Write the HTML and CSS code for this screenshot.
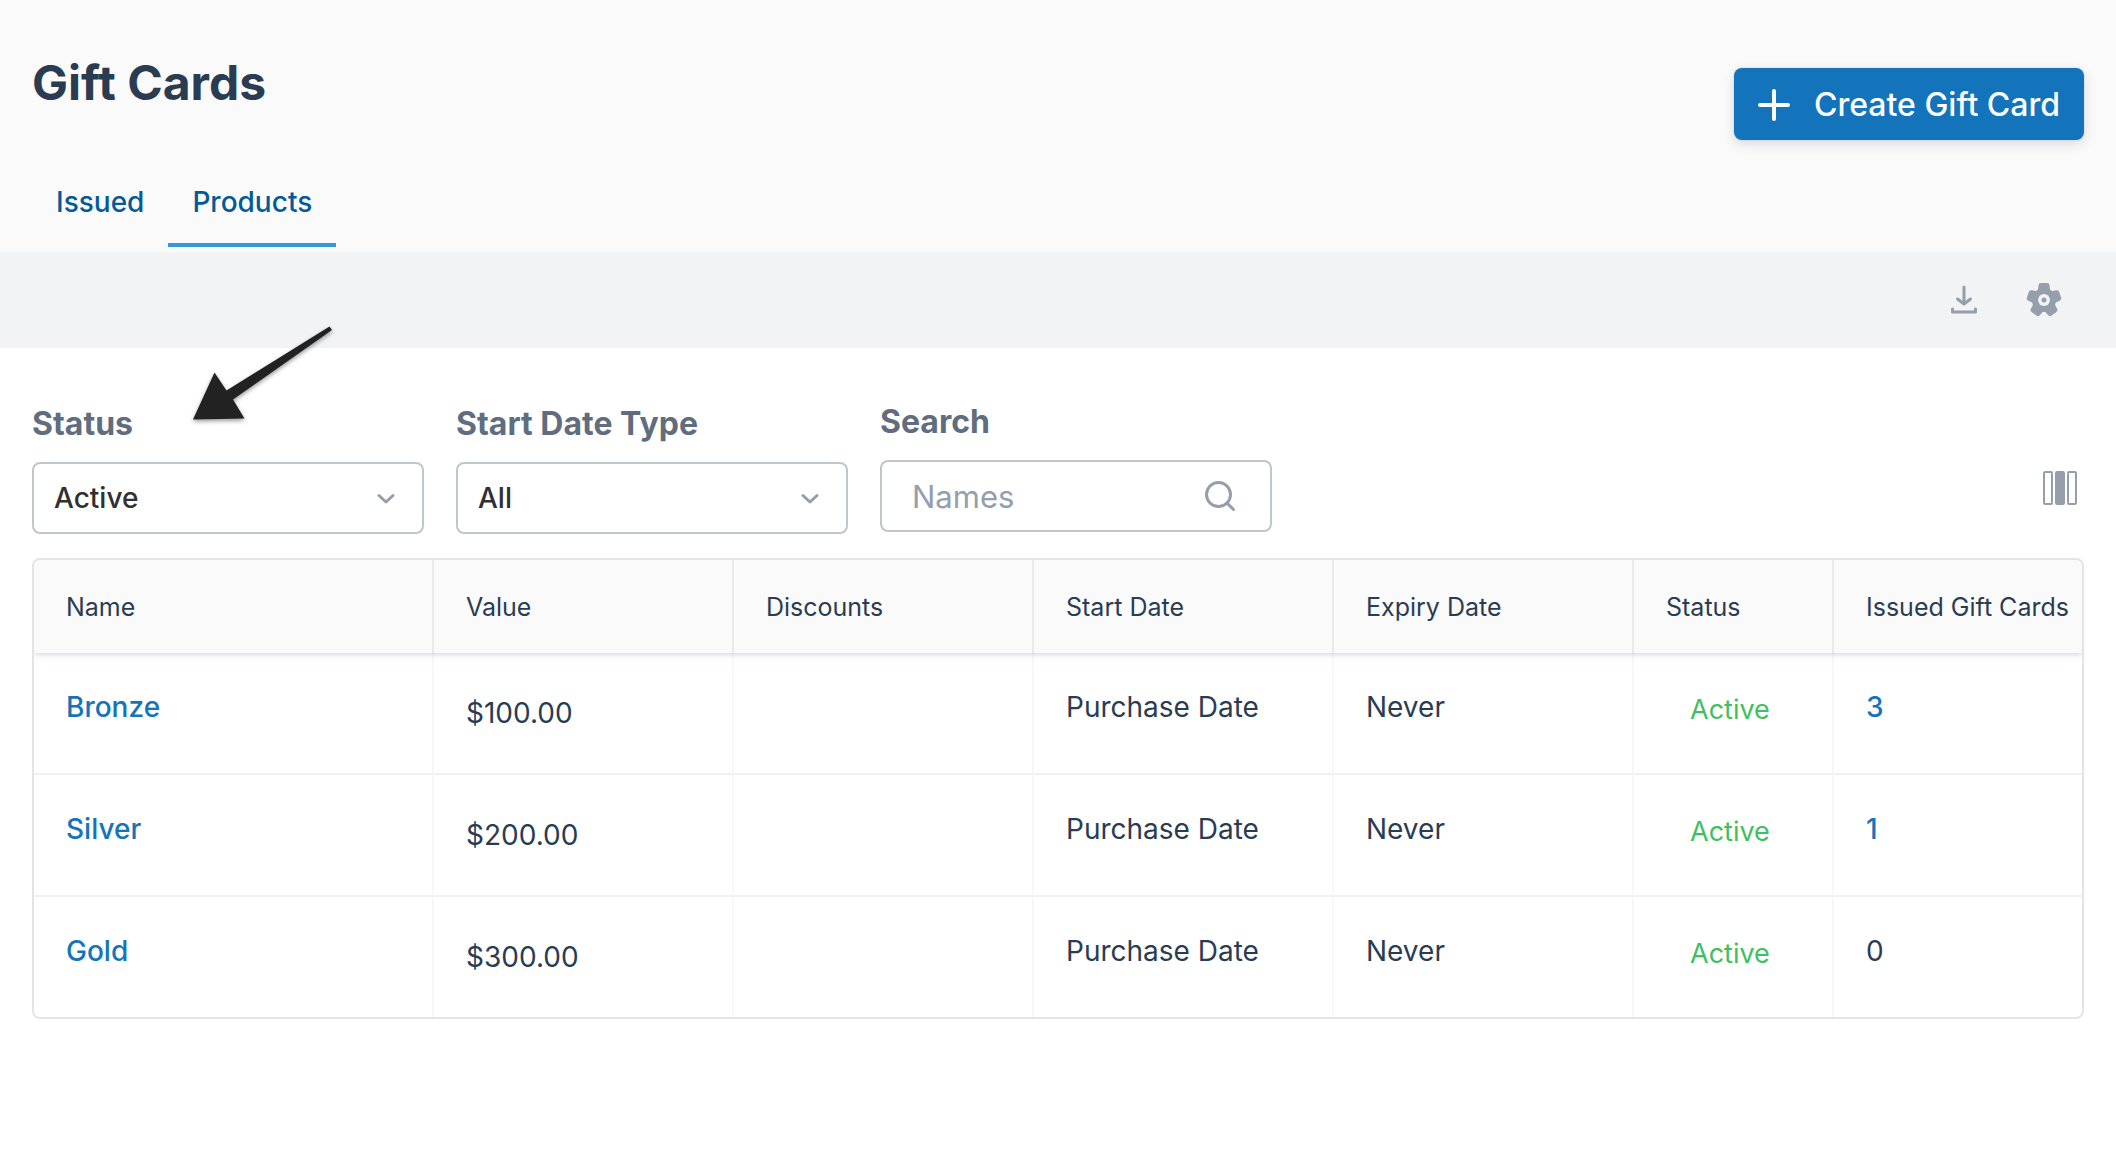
FILE: index.html
```html
<!DOCTYPE html>
<html lang="en">
<head>
<meta charset="utf-8">
<meta name="viewport" content="width=device-width, initial-scale=1">
<title>Gift Cards</title>
<link rel="stylesheet" href="styles.css">
</head>
<body>
<header class="page-header">
  <div class="heading">
    <h1 class="title">Gift Cards</h1>
    <nav class="tabs" aria-label="Gift card views">
      <a class="tab" href="#issued">Issued</a>
      <a class="tab tab-current" href="#products" aria-current="page">Products</a>
    </nav>
  </div>
  <button class="create-button" type="button">
    <svg class="icon-plus" viewBox="0 0 32 32" aria-hidden="true"><path d="M16 2v28M2 16h28"/></svg>
    Create Gift Card
  </button>
</header>

<div class="toolbar">
  <button class="icon-button" type="button" aria-label="Download">
    <svg class="icon" viewBox="0 0 32 32" aria-hidden="true">
      <path class="line" d="M16 3v17M9.500 15l6.500 5 6.500-5M4.500 25v3h23v-3"/>
    </svg>
  </button>
  <button class="icon-button" type="button" aria-label="Settings">
    <svg class="icon icon-gear" viewBox="-18 -18 36 36" aria-hidden="true">
      <circle class="solid" r="12"/>
      <g class="petals">
        <path d="M-3-14.500h6l1 8h-8z"/>
        <path d="M-3-14.500h6l1 8h-8z" transform="rotate(72)"/>
        <path d="M-3-14.500h6l1 8h-8z" transform="rotate(144)"/>
        <path d="M-3-14.500h6l1 8h-8z" transform="rotate(216)"/>
        <path d="M-3-14.500h6l1 8h-8z" transform="rotate(288)"/>
      </g>
      <circle class="hole" r="6"/>
      <circle class="solid" r="2.500"/>
    </svg>
  </button>
</div>

<main class="content">
  <form class="filters">
    <div class="field">
      <label class="label" for="status">Status</label>
      <div class="control">
        <select class="select" id="status"><option>Active</option></select>
        <svg class="chevron" viewBox="0 0 18 12" aria-hidden="true"><path d="M2 2.500l7 6.500 7-6.500"/></svg>
      </div>
    </div>
    <div class="field">
      <label class="label" for="start-type">Start Date Type</label>
      <div class="control">
        <select class="select" id="start-type"><option>All</option></select>
        <svg class="chevron" viewBox="0 0 18 12" aria-hidden="true"><path d="M2 2.500l7 6.500 7-6.500"/></svg>
      </div>
    </div>
    <div class="field field-search">
      <label class="label" for="search">Search</label>
      <div class="control">
        <input class="input" id="search" type="text" placeholder="Names">
        <svg class="icon-search" viewBox="0 0 32 32" aria-hidden="true"><circle cx="14.500" cy="14.500" r="12"/><path d="M23 23l6.500 6.500"/></svg>
      </div>
    </div>
    <button class="columns-button" type="button" aria-label="Choose columns">
      <svg class="icon-columns" viewBox="0 0 34 34" aria-hidden="true">
        <rect class="outline" x="1" y="1" width="8" height="32" rx="1"/>
        <rect class="solid" x="12" y="0" width="10" height="34" rx="2"/>
        <rect class="outline" x="25" y="1" width="8" height="32" rx="1"/>
      </svg>
    </button>
    <svg class="arrow" viewBox="0 0 152 108" aria-hidden="true"><path d="M3 99.500L24.500 52.500 36.500 70.500 139.500 6.500 142 10 43 79.500 54.500 98.500z"/></svg>
  </form>

  <div class="table-frame">
    <table class="table">
      <colgroup><col class="col-name"><col class="col-mid"><col class="col-mid"><col class="col-mid"><col class="col-mid"><col class="col-status"><col></colgroup>
      <thead>
        <tr><th>Name</th><th>Value</th><th>Discounts</th><th>Start Date</th><th>Expiry Date</th><th>Status</th><th>Issued Gift Cards</th></tr>
      </thead>
      <tbody>
        <tr><td><a class="link" href="#bronze">Bronze</a></td><td class="money">$100.00</td><td></td><td>Purchase Date</td><td>Never</td><td class="state">Active</td><td><a class="link" href="#bronze-issued">3</a></td></tr>
        <tr><td><a class="link" href="#silver">Silver</a></td><td class="money">$200.00</td><td></td><td>Purchase Date</td><td>Never</td><td class="state">Active</td><td><a class="link" href="#silver-issued">1</a></td></tr>
        <tr><td><a class="link" href="#gold">Gold</a></td><td class="money">$300.00</td><td></td><td>Purchase Date</td><td>Never</td><td class="state">Active</td><td>0</td></tr>
      </tbody>
    </table>
  </div>
</main>
</body>
</html>
```
FILE: styles.css
```css
* {
  box-sizing: border-box;
}

body {
  margin: 0;
  background: #fff;
  color: #2a3c52;
  font: 400 28px/40px Inter, "Liberation Sans", sans-serif;
}

button,
input,
select {
  margin: 0;
  font: inherit;
}

/* Header */
.page-header {
  display: flex;
  justify-content: space-between;
  align-items: flex-start;
  padding: 51px 32px 5px;
  background: #fafafa;
}

.title {
  margin: 0;
  font-size: 48px;
  line-height: 64px;
  font-weight: 700;
}

.tabs {
  display: flex;
  margin-top: 49px;
}

.tab {
  padding: 18px 24px 21px;
  border-bottom: 4px solid transparent;
  color: #045a96;
  font-weight: 500;
  text-decoration: none;
}

.tab-current {
  border-color: #3498db;
}

.create-button {
  display: flex;
  align-items: center;
  gap: 24px;
  margin-top: 17px;
  padding: 17px 24px 15px;
  border: 0;
  border-radius: 8px;
  background: #1474bb;
  box-shadow: 0 0 2px rgba(42, 60, 82, 0.2), 0 4px 12px rgba(42, 60, 82, 0.16);
  color: #fff;
  font-size: 32px;
  font-weight: 500;
}

.icon-plus {
  width: 32px;
  height: 32px;
  fill: none;
  stroke: #fff;
  stroke-width: 4;
  stroke-linecap: round;
}

/* Toolbar */
.toolbar {
  display: flex;
  justify-content: flex-end;
  align-items: center;
  gap: 46px;
  height: 96px;
  padding: 0 54px;
  background: #f1f3f5;
}

.icon-button,
.columns-button {
  display: flex;
  padding: 0;
  border: 0;
  background: none;
}

.icon {
  width: 32px;
  height: 32px;
}

.icon-gear {
  width: 36px;
  height: 36px;
}

.solid {
  fill: #959eab;
}

.line {
  fill: none;
  stroke: #959eab;
  stroke-width: 3;
  stroke-linecap: round;
  stroke-linejoin: round;
}

.petals {
  fill: #959eab;
  stroke: #959eab;
  stroke-width: 5;
  stroke-linejoin: round;
}

.hole {
  fill: #f1f3f5;
}

/* Filters */
.content {
  padding: 50px 32px;
}

.filters {
  position: relative;
  display: flex;
  align-items: flex-start;
  gap: 32px;
}

.field {
  flex: 0 1 392px;
  padding-top: 2px;
}

.field-search {
  padding: 0 0 2px;
}

.label {
  display: block;
  margin-bottom: 18px;
  padding-top: 4px;
  color: #5f6d7e;
  font-size: 32px;
  line-height: 40px;
  font-weight: 700;
}

.control {
  position: relative;
}

.select,
.input {
  display: block;
  width: 100%;
  height: 72px;
  padding: 0 20px;
  border: 2px solid #c1c6cc;
  border-radius: 8px;
  background: #fff;
  color: #303030;
  appearance: none;
}

.select {
  font-weight: 500;
}

.input {
  padding: 0 80px 0 30px;
  font-size: 31px;
}

.input::placeholder {
  color: #959eab;
  opacity: 1;
}

.chevron {
  position: absolute;
  top: 31px;
  right: 29px;
  width: 18px;
  height: 12px;
  fill: none;
  stroke: #959eab;
  stroke-width: 3;
  stroke-linecap: round;
  stroke-linejoin: round;
}

.icon-search {
  position: absolute;
  top: 20px;
  right: 36px;
  width: 32px;
  height: 32px;
  fill: none;
  stroke: #959eab;
  stroke-width: 3;
  stroke-linecap: round;
}

.columns-button {
  margin: 73px 7px 0 auto;
}

.icon-columns {
  width: 34px;
  height: 34px;
}

.outline {
  fill: #fff;
  stroke: #959eab;
  stroke-width: 2;
}

.arrow {
  position: absolute;
  top: -78px;
  left: 158px;
  width: 152px;
  height: 108px;
  fill: #222;
  filter: drop-shadow(0 2px 2px rgba(0, 0, 0, 0.4));
}

/* Table */
.table-frame {
  margin-top: 24px;
  overflow: hidden;
  border: 2px solid #e3e4e5;
  border-radius: 8px;
}

.table {
  width: 100%;
  border-spacing: 0;
  table-layout: fixed;
}

.col-name {
  width: 400px;
}

.col-mid {
  width: 300px;
}

.col-status {
  width: 200px;
}

.table thead {
  position: relative;
  box-shadow: 0 1px 6px rgba(42, 60, 82, 0.25);
}

.table th {
  height: 93px;
  padding: 0 0 0 32px;
  border-right: 2px solid #eaeaeb;
  background: #fafafa;
  font-size: 25px;
  font-weight: 400;
  text-align: left;
  white-space: nowrap;
}

.table td {
  height: 122px;
  padding: 34px 0 0 32px;
  border-right: 2px solid #f8f8f9;
  border-bottom: 2px solid #f0f0f1;
  vertical-align: top;
}

.table th:last-child,
.table td:last-child {
  border-right: 0;
}

.table tr:last-child td {
  height: 120px;
  border-bottom: 0;
}

.table .money {
  padding-top: 40px;
}

.table .state {
  padding: 37px 0 0 56px;
  color: #40bf60;
  font-size: 27px;
}

.link {
  color: #1474bb;
  font-weight: 500;
  text-decoration: none;
}
```
